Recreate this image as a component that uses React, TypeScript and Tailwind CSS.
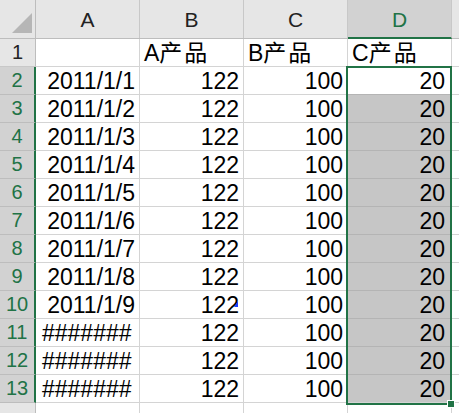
const dates = [
  "2011/1/1",
  "2011/1/2",
  "2011/1/3",
  "2011/1/4",
  "2011/1/5",
  "2011/1/6",
  "2011/1/7",
  "2011/1/8",
  "2011/1/9",
  "#######",
  "#######",
  "#######",
];

const font = { fontFamily: '"Liberation Sans", "Noto Sans CJK SC", sans-serif' };

export default function App() {
  return (
    <div className="relative w-[459px] h-[413px] overflow-hidden bg-white text-black" style={font}>
      {/* Column headers */}
      <div className="flex h-[39px] bg-[#e6e6e6] border-b border-[#bdbdbd]">
        <div className="relative w-[36px] shrink-0 border-r border-[#bdbdbd]">
          <svg className="absolute left-[12px] top-[13px]" width="20" height="20" viewBox="0 0 20 20">
            <polygon points="20,0 20,20 0,20" fill="#b6b6b6" />
          </svg>
        </div>
        {["A", "B", "C"].map((c) => (
          <div
            key={c}
            className="w-[104px] shrink-0 border-r border-[#c8c8c8] flex items-center justify-center text-[21px] text-[#222] pt-[2px]"
          >
            {c}
          </div>
        ))}
        <div className="w-[104px] shrink-0 border-r border-[#c8c8c8] bg-[#d2d2d2] flex items-center justify-center text-[21px] text-[#217346] border-b-2 border-b-[#217346] -mb-[1px] pt-[3px]">
          D
        </div>
        <div className="flex-1" />
      </div>

      {/* Row 1 */}
      <div className="flex h-[28px] border-b border-[#d4d4d4] text-[23px] leading-[29px]">
        <div className="w-[36px] shrink-0 bg-[#e6e6e6] border-r border-[#bdbdbd] border-b border-b-[#c8c8c8] -mb-[1px] flex items-center justify-center text-[20px] text-[#222]">
          1
        </div>
        <div className="w-[104px] shrink-0 border-r border-[#d4d4d4]" />
        <div className="w-[104px] shrink-0 border-r border-[#d4d4d4] pl-[4px] whitespace-nowrap">
          A<span className="tracking-[2px]">产品</span>
        </div>
        <div className="w-[104px] shrink-0 border-r border-[#d4d4d4] pl-[4px] whitespace-nowrap">
          B<span className="tracking-[2px]">产品</span>
        </div>
        <div className="w-[104px] shrink-0 border-r border-[#d4d4d4] pl-[4px] whitespace-nowrap">
          C<span className="tracking-[2px]">产品</span>
        </div>
        <div className="flex-1" />
      </div>

      {/* Rows 2-13 */}
      {dates.map((d, i) => (
        <div key={i} className="flex h-[28px] border-b border-[#d4d4d4] text-[23px] leading-[29px]">
          <div className="w-[36px] shrink-0 bg-[#d2d2d2] border-r-2 border-[#217346] border-b border-b-[#bdbdbd] -mb-[1px] flex items-center justify-center text-[20px] text-[#217346]">
            {i + 2}
          </div>
          <div
            className={`w-[104px] shrink-0 border-r border-[#d4d4d4] whitespace-nowrap ${
              d.startsWith("#") ? "pl-[6px] text-left" : "pr-[4px] text-right"
            }`}
          >
            {d}
          </div>
          <div className="relative w-[104px] shrink-0 border-r border-[#d4d4d4] pr-[4px] text-right">
            122
            {i === 8 && (
              <svg className="absolute right-[5px] top-[10px]" width="4" height="6" viewBox="0 0 4 6">
                <polygon points="4,0 4,6 0,6" fill="#1a3cff" />
              </svg>
            )}
          </div>
          <div className="w-[104px] shrink-0 border-r border-[#d4d4d4] pr-[4px] text-right">100</div>
          <div
            className={`w-[104px] shrink-0 border-r border-[#d4d4d4] pr-[6px] text-right ${
              i === 0 ? "bg-white" : "bg-[#c6c6c6] border-t border-t-[#b4b4b4] -mt-[1px]"
            }`}
          >
            20
          </div>
          <div className="flex-1" />
        </div>
      ))}

      {/* Row 14 (partial) */}
      <div className="flex h-[28px]">
        <div className="w-[36px] shrink-0 bg-[#e6e6e6] border-r border-[#bdbdbd]" />
        <div className="w-[104px] shrink-0 border-r border-[#d4d4d4]" />
        <div className="w-[104px] shrink-0 border-r border-[#d4d4d4]" />
        <div className="w-[104px] shrink-0 border-r border-[#d4d4d4]" />
        <div className="w-[104px] shrink-0 border-r border-[#d4d4d4]" />
        <div className="flex-1" />
      </div>

      {/* Selection outline D2:D13 */}
      <div className="absolute left-[346px] top-[66px] w-[106px] h-[339px] border-2 border-[#217346] pointer-events-none" />
      <div className="absolute left-[447px] top-[400px] w-[8px] h-[8px] bg-[#217346] border border-white" />
    </div>
  );
}
